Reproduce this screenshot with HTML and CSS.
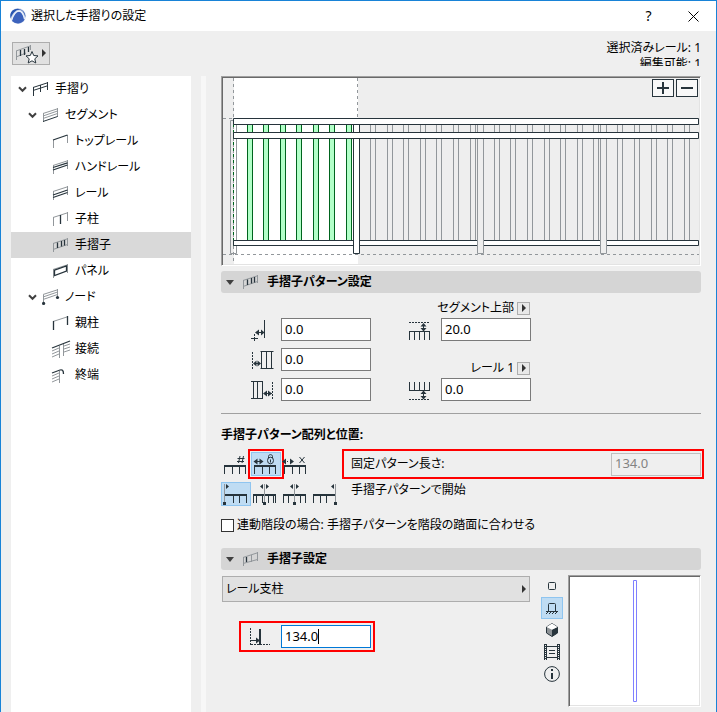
FILE: index.html
```html
<!DOCTYPE html>
<html lang="ja">
<head>
<meta charset="utf-8">
<meta name="viewport" content="width=device-width, initial-scale=1">
<title>選択した手摺りの設定</title>
<link rel="stylesheet" href="styles.css">
</head>
<body>
<svg class="defs" width="0" height="0" aria-hidden="true">
  <defs>
    <symbol id="chevron" viewBox="0 0 9 7"><path d="M1 1.2 4.5 4.8 8 1.2" fill="none" stroke="#404040" stroke-width="2"/></symbol>
    <symbol id="baluster" viewBox="0 0 18 14">
      <path d="M1.500 5v9M15.500 0v8M1 5.500 15.500.8M1 11.500 15.500 6.500" class="g"/>
      <path d="M5.500 4.500v5.500M9.500 3v5.500M12.500 2v5.500" class="d2t"/>
    </symbol>
    <symbol id="tri-right" viewBox="0 0 4 8"><path d="M0 0 4 4 0 8z" fill="#333"/></symbol>
    <symbol id="comb" viewBox="0 0 24 10"><path d="M1 1h22" class="d2"/><path d="M1.500 1v8M9.500 1v8M16.500 1v8M22.500 1v8" class="d"/></symbol>
  </defs>
</svg>
<div class="window">
  <header class="titlebar">
    <svg class="logo" viewBox="0 0 16 16" aria-hidden="true">
      <circle cx="8" cy="8" r="7.800" fill="#c3d0e8"/>
      <path d="M2 12.500C3 7 6 3 9 3.200c3 .2 4.500 4 5.500 8.500A8 8 0 0 1 2 13z" fill="#3c62bc"/>
      <path d="M.6 10.500C2.500 5 6 1.500 9.500 1.700c3 .3 4.700 3 5.900 7.500A8 8 0 0 0 2.500 2.500 8 8 0 0 0 .6 10.500z" fill="#2855b0"/>
      <path d="M1.500 12.500C3.500 6.500 6 3.200 9 3.200c2.500 0 4.500 3.300 5.500 8" fill="none" stroke="#eef3fb" stroke-width="1.200"/>
    </svg>
    <h1>選択した手摺りの設定</h1>
    <button class="caption" aria-label="ヘルプ">?</button>
    <button class="caption" aria-label="閉じる"><svg width="11" height="11" viewBox="0 0 11 11"><path d="M.5.5l10 10M10.500.5l-10 10" stroke="#000" fill="none"/></svg></button>
  </header>

  <div class="topbar">
    <button class="favorite" aria-label="お気に入り">
      <svg width="32" height="20" viewBox="0 0 32 20">
        <path d="M1.500 7v9M1 7 15 2M1 13l10-4M15.500 1v5" class="g"/>
        <path d="M5.500 6v6M9.500 5v6M13.500 3v5" class="d2t"/>
        <path d="M17 7.500l1.700 4 4.300.4-3.200 2.900 1 4.200-3.800-2.200-3.800 2.200 1-4.200-3.200-2.900 4.300-.4z" fill="#fff" stroke="#27343c"/>
        <path d="M27 5l4 4-4 4z" fill="#333"/>
      </svg>
    </button>
    <div class="status"><div>選択済みレール: 1</div><div class="cut">編集可能: 1</div></div>
  </div>

  <div class="columns">
    <nav class="tree" aria-label="手摺り">
      <a href="#" class="l0"><svg class="chev"><use href="#chevron"/></svg>
        <svg class="ico" viewBox="0 0 18 14"><path d="M1 5.500 15.500.8M1 8.500 15.500 3.800" class="d"/><path d="M1.500 5v9M8.500 3v7M15.500 0v8" class="d"/></svg>手摺り</a>
      <a href="#" class="l1"><svg class="chev"><use href="#chevron"/></svg>
        <svg class="ico" viewBox="0 0 18 14"><path d="M1.500 5v9M15.500 0v9M1 5.500 15.500.8M1 8 15.500 3M1 10.500 15.500 5.500" class="g"/><path d="M1 13.500 15.500 8.500" class="d"/></svg>セグメント</a>
      <a href="#" class="l2"><svg class="ico" viewBox="0 0 18 14"><path d="M1.500 6v8M15.500 1v8" class="g"/><path d="M1 6 15.500 1" class="d2t"/></svg>トップレール</a>
      <a href="#" class="l2"><svg class="ico" viewBox="0 0 18 14"><path d="M1.500 5v9M15.500 0v9M1 5.500 15.500.8" class="g"/><path d="M1 7.500 15.500 2.800M1 10 15.500 5" class="d2t"/></svg>ハンドレール</a>
      <a href="#" class="l2"><svg class="ico" viewBox="0 0 18 14"><path d="M1.500 5v9M15.500 0v9M1 5.500 15.500.8" class="g"/><path d="M1 9 15.500 4M1 11.500 15.500 6.500" class="d2t"/></svg>レール</a>
      <a href="#" class="l2"><svg class="ico" viewBox="0 0 18 14"><path d="M1.500 5v9M15.500 0v9M1 5.500 15.500.8" class="g"/><path d="M8.500 3v9" class="d2t"/></svg>子柱</a>
      <a href="#" class="l2 on" aria-current="true"><svg class="ico"><use href="#baluster"/></svg>手摺子</a>
      <a href="#" class="l2"><svg class="ico" viewBox="0 0 18 14"><path d="M1.500 5v9M15.500 0v9M1 5.500 15.500.8" class="g"/><path d="M2.500 6.200 14.500 2v5L2.500 11.500z" class="d2t"/></svg>パネル</a>
      <a href="#" class="l1"><svg class="chev"><use href="#chevron"/></svg>
        <svg class="ico node" viewBox="0 0 18 16"><path d="M1.500 6v9M15.500 0v9M1 5.500 15.500.8M1 8 15.500 3M1 10.500 15.500 5.500" class="g"/><circle cx="1.600" cy="14.400" r="1.600" fill="#27343c"/><circle cx="15.500" cy="8.500" r="1.600" fill="#27343c"/></svg>ノード</a>
      <a href="#" class="l2"><svg class="ico" viewBox="0 0 18 14"><path d="M1 5.500 15.500.8" class="g"/><path d="M1.500 5v9M15.500 0v9" class="d2t"/></svg>親柱</a>
      <a href="#" class="l2"><svg class="ico tall" viewBox="0 0 18 18"><path d="M0 11l7-3M0 14l7-3M0 17l7-3M12 6l6-2M12 9l6-2M12 12l6-2M7.500 6v12M11.500 4v12" class="g"/><path d="M0 8 18 1" class="d2t"/></svg>接続</a>
      <a href="#" class="l2"><svg class="ico tall" viewBox="0 0 18 18"><path d="M0 10l7-3M0 13l7-3M0 16l7-3M7.500 5v12" class="g"/><path d="M0 7l8-3c2-.6 3.500 0 3.500 4" class="d2t"/></svg>終端</a>
    </nav>
    <div class="splitter"></div>

    <main>
      <section class="preview sunken">
        <svg class="scene" viewBox="0 0 476 186" role="img" aria-label="手摺りプレビュー">
          <path d="M11 0h124v186H11z" fill="#fff"/>
          <path d="M10.500 0v186M134.500 0v40" class="g" stroke-dasharray="3 3"/>
          <path d="M0 40.500h10M0 176.500h476" class="g" stroke-dasharray="3 3"/>
          <path d="M7.500 42.500h6v133h-6z" class="g"/>
          <path d="M10.500 46v122" stroke="#00641e" stroke-dasharray="3 3"/>
          <g fill="#b2ffc8" stroke="#00641e">
            <path d="M24.500 46h5v117h-5zM40.500 46h5v117h-5zM57.500 46h5v117h-5zM73.500 46h5v117h-5zM90.500 46h5v117h-5zM106.500 46h5v117h-5zM123.500 46h5v117h-5z"/>
          </g>
          <path class="g" d="M147.500 46v117M152.500 46v117M164.500 46v117M169.500 46v117M180.500 46v117M185.500 46v117M197.500 46v117M202.500 46v117M213.500 46v117M218.500 46v117M230.500 46v117M235.500 46v117M247.500 46v117M252.500 46v117M271.500 46v117M276.500 46v117M287.500 46v117M292.500 46v117M304.500 46v117M309.500 46v117M321.500 46v117M326.500 46v117M337.500 46v117M342.500 46v117M354.500 46v117M359.500 46v117M370.500 46v117M375.500 46v117M394.500 46v117M399.500 46v117M411.500 46v117M416.500 46v117M428.500 46v117M433.500 46v117M444.500 46v117M449.500 46v117M461.500 46v117M466.500 46v117"/>
          <path d="M10.500 162.500h465v5h-465z" class="w"/>
          <path d="M254.500 42.500h6v133h-6zM377.500 42.500h6v133h-6z" fill="#eee" stroke="#92979b"/>
          <path d="M130.500 42.500h6v133h-6z" class="w"/>
          <path d="M10.500 40.500h465v6h-465zM10.500 54.500h465v6h-465z" class="w"/>
        </svg>
        <div class="zoom">
          <button aria-label="拡大"><svg width="12" height="12" viewBox="0 0 12 12"><path d="M0 6h12M6 0v12" class="d2"/></svg></button>
          <button aria-label="縮小"><svg width="12" height="12" viewBox="0 0 12 12"><path d="M0 6h12" class="d2"/></svg></button>
        </div>
      </section>

      <h2 class="bar"><svg class="down" viewBox="0 0 8 5"><path d="M0 0h8L4 5z" fill="#404040"/></svg><svg class="ico"><use href="#baluster"/></svg>手摺子パターン設定</h2>
      <section class="offsets">
        <div class="left">
          <label><svg class="dim" viewBox="0 0 24 22"><path d="M15.500 1v18" class="d"/><path d="M8 13.500h6" class="d"/><path d="M10 10.500v6l-4-3zM12 10.500v6l3.500-3z" fill="#27343c"/><path d="M5.500 15v2M5.500 18v4M2 19.500h3M6 19.500h3" class="d"/></svg><input type="text" value="0.0"></label>
          <label><svg class="dim" viewBox="0 0 24 22"><path d="M3.500 3v18" class="d" stroke-dasharray="2 1"/><path d="M11.500 2.500h13M11.500 19.500h13M12.500 2v18M17.500 2v18M22.500 2v18" class="d"/><path d="M5 14.500h6" class="d"/><path d="M7.500 11.500v6l-3.500-3zM8.500 11.500v6l3.500-3z" fill="#27343c"/></svg><input type="text" value="0.0"></label>
          <label><svg class="dim" viewBox="0 0 24 22"><path d="M23.500 3v18" class="d" stroke-dasharray="2 1"/><path d="M2 2.500h12M2 19.500h12M4.500 2v18M8.500 2v18M13.500 2v18" class="d"/><path d="M15 14.500h8" class="d"/><path d="M18 11.500v6l-4-3zM19 11.500v6l4-3z" fill="#27343c"/></svg><input type="text" value="0.0"></label>
        </div>
        <div class="right">
          <div class="anchor">
            <div class="cap"><label for="top">セグメント上部</label><button aria-label="セグメント上部を選択"><svg width="4" height="8"><use href="#tri-right"/></svg></button></div>
            <div class="field"><svg class="dim" viewBox="0 0 24 22"><path d="M0 3.500h20" class="d" stroke-dasharray="2 1"/><path d="M0 12.500h21M.5 12v9M5.500 12v9M10.500 12v9M15.500 12v9M20.500 12v9M14.500 5v6" class="d"/><path d="M11.500 7.500h6l-3-3.500zM11.500 9h6l-3 3.500z" fill="#27343c"/></svg><input id="top" type="text" value="20.0"></div>
          </div>
          <div class="anchor">
            <div class="cap"><label for="rail">レール 1</label><button aria-label="レールを選択"><svg width="4" height="8"><use href="#tri-right"/></svg></button></div>
            <div class="field"><svg class="dim" viewBox="0 0 24 22"><path d="M0 20.500h20" class="d" stroke-dasharray="2 1"/><path d="M0 11.500h21M.5 3v9M5.500 3v9M10.500 3v9M15.500 3v9M20.500 3v9M14.500 12v7" class="d"/><path d="M11.500 15h6l-3-3.500zM11.500 17h6l-3 3.500z" fill="#27343c"/></svg><input id="rail" type="text" value="0.0"></div>
          </div>
        </div>
      </section>

      <section class="layout">
        <h3>手摺子パターン配列と位置:</h3>
        <div class="line">
          <div class="tools">
            <button aria-label="手摺子の数"><svg width="30" height="22" viewBox="0 0 30 22"><use href="#comb" x="2" y="12" width="24" height="10"/><path d="M19 3l-1.500 7M22.500 3l-1.500 7M16.500 5.500h7M16 8.500h7" class="d"/></svg></button>
            <button class="on mark" aria-pressed="true" aria-label="固定パターン長さ"><svg width="30" height="22" viewBox="0 0 30 22"><use href="#comb" x="2" y="12" width="24" height="10"/><path d="M4 8.500h7" class="d"/><path d="M6.500 5.500v6l-4-3zM8.500 5.500v6l4-3z" fill="#27343c"/><ellipse cx="19.500" cy="7.500" rx="3" ry="3.300" class="d"/><path d="M17.500 5V3.500c0-2.500 4-2.500 4 0V5M19.500 6.500v3" class="d"/></svg></button>
            <button aria-label="最適パターン長さ"><svg width="30" height="22" viewBox="0 0 30 22"><use href="#comb" x="2" y="12" width="24" height="10"/><path d="M6 8.500h2" class="d" stroke-dasharray="1 1"/><path d="M5 5.500v6l-4-3zM9 5.500v6l4-3z" fill="#27343c"/><path d="M18.500 4l5 6M23.500 4l-5 6" class="d"/></svg></button>
          </div>
          <label class="fixed mark"><span>固定パターン長さ:</span><input type="text" value="134.0" disabled></label>
        </div>
        <div class="line">
          <div class="tools">
            <button class="on" aria-pressed="true" aria-label="始点"><svg width="30" height="22" viewBox="0 0 30 22"><path d="M3 12h23" class="d2"/><path d="M3.500 12v8M12.500 12v8M18.500 12v8M25.500 12v8" class="d"/><path d="M3.500 1v18" class="g"/><path d="M5 1v5l3-2.500z" fill="#27343c"/><path d="M2 19h3v3H2z" fill="#27343c"/></svg></button>
            <button aria-label="中央、手摺子間"><svg width="30" height="22" viewBox="0 0 30 22"><path d="M2 12h23" class="d2"/><path d="M2.500 12v8M5.500 12v8M11.500 12v8M17.500 12v8M22.500 12v8M24.500 12v8" class="d"/><path d="M13.500 1v18" class="g"/><path d="M12 1v5L9 3.500zM15 1v5l3-2.500zM12 19h3v3h-3z" fill="#27343c"/></svg></button>
            <button aria-label="中央"><svg width="30" height="22" viewBox="0 0 30 22"><path d="M2 12h23" class="d2"/><path d="M2.500 12v8M7.500 12v8M19.500 12v8M24.500 12v8" class="d"/><path d="M13.500 1v18" class="g"/><path d="M12 1v5L9 3.500zM15 1v5l3-2.500zM12 19h3v3h-3z" fill="#27343c"/></svg></button>
            <button aria-label="終点"><svg width="30" height="22" viewBox="0 0 30 22"><path d="M2 12h23" class="d2"/><path d="M2.500 12v8M9.500 12v8M15.500 12v8M24.500 12v8" class="d"/><path d="M24.500 1v18" class="g"/><path d="M23 1v5l-3-2.500zM23 19h3v3h-3z" fill="#27343c"/></svg></button>
          </div>
          <span class="desc">手摺子パターンで開始</span>
        </div>
        <label class="check"><input type="checkbox">連動階段の場合: 手摺子パターンを階段の踏面に合わせる</label>
      </section>

      <h2 class="bar"><svg class="down" viewBox="0 0 8 5"><path d="M0 0h8L4 5z" fill="#404040"/></svg><svg class="ico" viewBox="0 0 18 14"><path d="M1.500 5v9M15.500 0v9M9.500 3v7M1 5.500 15.500.8M1 11.500 15.500 7.500" class="g"/><path d="M4.500 5v5" class="d2t"/></svg>手摺子設定</h2>
      <section class="settings">
        <div class="kind">
          <div class="pick"><select aria-label="手摺子タイプ"><option>レール支柱</option></select><svg width="4" height="8"><use href="#tri-right"/></svg></div>
          <label class="size mark"><svg class="dim" viewBox="0 0 24 22"><path d="M1.500 2v17M2 18.500h19" class="d" stroke-dasharray="2 1"/><path d="M11 3v16" class="d2"/><path d="M2 14.500h6" class="d"/><path d="M7 11.500v6l4-3z" fill="#27343c"/></svg><span class="edit"><input type="text" value="134.0"><i class="caret"></i></span></label>
        </div>
        <div class="views">
          <button aria-label="2Dシンボル"><svg width="16" height="16" viewBox="0 0 16 16"><rect x="4.500" y="4.500" width="7" height="7" rx="1" class="d"/></svg></button>
          <button class="on" aria-pressed="true" aria-label="正面図"><svg width="16" height="16" viewBox="0 0 16 16"><path d="M4.500 11V4.500q0-1 1-1h5q1 0 1 1V11M2 11.500h12" class="d"/><path d="M2 14l2-2M5 14l2-2M8 14l2-2M11 14l2-2" class="d"/></svg></button>
          <button aria-label="3Dビュー"><svg width="16" height="16" viewBox="0 0 16 16"><path d="M2.500 5 8 1.500 13.500 5v6L8 14.500 2.500 11z" fill="#8d9296" stroke="#27343c"/><path d="M8 7.500 13.500 5v6L8 14.500z" fill="#27343c"/><path d="M2.500 5 8 1.500 13.500 5 8 7.800z" fill="#fff"/></svg></button>
          <button aria-label="プレビュー画像"><svg width="16" height="16" viewBox="0 0 16 16"><path d="M.5 0v16M15.500 0v16M2.500 0v16M13.500 0v16M3 2.500h10M3 13.500h10M5 6.500h6M5 9.500h6" class="d"/><path d="M1.500 0v16M14.500 0v16" class="d" stroke-dasharray="1 1"/></svg></button>
          <button aria-label="情報"><svg width="16" height="16" viewBox="0 0 16 16"><circle cx="8" cy="8" r="7.400" class="d"/><path d="M8 7v6M8 3v2" class="d2"/></svg></button>
        </div>
        <div class="part sunken"><svg width="4" height="122" viewBox="0 0 4 122"><path d="M.5.5h3v121h-3z" fill="#fff" stroke="#8080ff"/></svg></div>
      </section>
    </main>
  </div>
</div>
</body>
</html>
```
FILE: styles.css
```css
* { box-sizing: border-box; }
body {
  margin: 0;
  background: #efefef;
  color: #000;
  font: 12px/16px "Noto Sans", "Noto Sans CJK JP", sans-serif;
  font-feature-settings: "palt";
}
h1, h2, h3 { margin: 0; font-size: 12px; line-height: 16px; }
button, input, select { font: inherit; font-feature-settings: inherit; color: inherit; margin: 0; padding: 0; border-radius: 0; }
button { display: flex; align-items: center; justify-content: center; background: none; border: 0; }
svg { display: block; flex: none; overflow: visible; }
.defs { position: absolute; }

.g { fill: none; stroke: #92979b; }
.d { fill: none; stroke: #27343c; }
.d2, .d2t { fill: none; stroke: #27343c; stroke-width: 2; }
.d2t { stroke-width: 1.3; }
.w { fill: #fff; stroke: #27343c; }

.window {
  display: flex;
  flex-direction: column;
  min-height: 100vh;
  border: 1px solid #1883d7;
  border-bottom: 0;
}
.titlebar { display: flex; align-items: center; height: 30px; padding: 0 0 0 9px; background: #fff; }
.titlebar h1 { flex: 1; font-weight: 400; }
.logo { width: 16px; height: 16px; margin-right: 5px; }
.caption { width: 45px; height: 30px; font-size: 14px; }

.topbar { display: flex; justify-content: space-between; align-items: flex-start; height: 45px; padding: 9px 15px 0 11px; }
.topbar .favorite { margin-top: 2px; width: 38px; height: 23px; background: #e1e1e1; border: 1px solid #adadad; }
.status { text-align: right; }
.cut { height: 10px; overflow: hidden; }

.columns { display: flex; flex: 1; padding: 0 15px 0 10px; }
.tree { width: 180px; flex: none; background: #fff; }
.tree a { display: flex; align-items: center; height: 26px; color: inherit; text-decoration: none; }
.tree .l0 { padding-left: 7px; }
.tree .l1 { padding-left: 17px; }
.tree .l2 { padding-left: 41px; }
.on { background: #d9d9d9; }
.chev { width: 9px; height: 7px; margin-right: 5px; }
.ico { width: 18px; height: 14px; margin-right: 5px; }
.ico.node { height: 16px; }
.ico.tall { height: 18px; }
.splitter { width: 5px; flex: none; margin: 0 15px 0 10px; background: #f7f7f7; }
main { flex: 1; min-width: 0; }

.sunken {
  border: 1px solid;
  border-color: #a0a0a0 #fff #fff #a0a0a0;
  box-shadow: inset 1px 1px #696969, inset -1px -1px #e3e3e3;
  padding: 1px;
}
.preview { position: relative; background: #eee; }
.scene { width: 100%; height: auto; }
.zoom { position: absolute; top: 2px; right: 2px; display: flex; gap: 2px; }
.zoom button { width: 22px; height: 18px; background: #f8f8f8; border: 1px solid #27343c; }

.bar {
  display: flex;
  align-items: center;
  height: 22px;
  margin-top: 5px;
  padding-left: 5px;
  border-radius: 3px;
  background: #d5d5d5;
}
.down { width: 8px; height: 5px; margin-right: 8px; }
.bar .ico { margin-right: 7px; }

input[type="text"] {
  width: 90px;
  height: 23px;
  padding: 0 3px 2px;
  background: #fff;
  border: 1px solid #7a7a7a;
  font-size: 13px;
}
input[type="text"]:disabled { background: #efefef; border-color: #bfbfbf; color: #838383; }
.dim { width: 24px; height: 22px; margin-right: 8px; }

.offsets { display: flex; padding: 8px 0 12px 28px; border-bottom: 1px solid #a0a0a0; }
.left { display: flex; flex-direction: column; gap: 7px; width: 160px; padding-top: 17px; }
.left label, .field { display: flex; align-items: center; }
.right { display: flex; flex-direction: column; gap: 20px; }
.cap { display: flex; justify-content: flex-end; align-items: center; gap: 3px; height: 17px; padding: 0 1px 3px 0; }
.cap button { width: 13px; height: 13px; background: #e8e8e8; border: 1px solid #adadad; }

.layout { padding-top: 13px; }
.layout h3 { margin-bottom: 9px; }
.line { display: flex; align-items: center; height: 24px; margin-bottom: 6px; }
.tools { display: flex; flex: none; width: 130px; }
.tools button { width: 30px; height: 24px; }
.tools .on, .views .on { background: #bfdcf3; border: 1px solid #8fc5f0; }
.desc { align-self: flex-start; }
.mark { outline: 2px solid #f00; outline-offset: 1px; }
.fixed { display: flex; flex: 1; align-items: center; justify-content: space-between; margin-left: -6px; padding-left: 6px; }
.line .fixed { height: 24px; }
.check { display: flex; align-items: center; gap: 3px; height: 18px; margin-top: 10px; }
.check input { appearance: none; width: 13px; height: 13px; background: #fff; border: 1px solid #333; }
.layout + .bar { margin-top: 14px; }

.settings { display: flex; align-items: flex-start; padding-top: 5px; }
.kind { flex: 1; padding: 1px 0 0 1px; }
.pick { position: relative; }
.pick select { appearance: none; width: 100%; height: 26px; padding: 0 3px; background: #e1e1e1; border: 1px solid #adadad; }
.pick svg { position: absolute; right: 4px; top: 9px; pointer-events: none; }
.size { display: inline-flex; align-items: center; height: 25px; margin: 22px 0 0 20px; padding: 0 1px 0 7px; }
.edit { position: relative; display: flex; }
.edit input[type="text"] { border-color: #0078d7; }
.caret { position: absolute; left: 37px; top: 4px; width: 1px; height: 15px; background: #000; }
.views { margin: 0 5px 0 11px; }
.views button { width: 22px; height: 22px; }
.part { display: flex; align-items: center; justify-content: center; width: 133px; height: 132px; background: #fff; }
```
